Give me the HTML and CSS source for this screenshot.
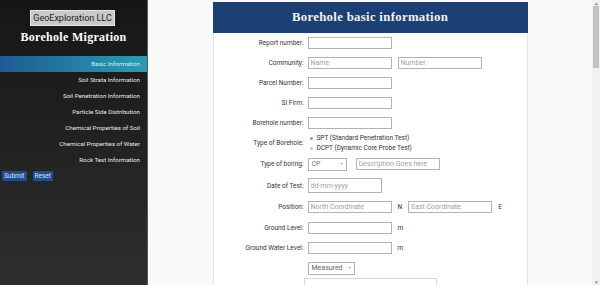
FILE: index.html
```html
<!DOCTYPE html>
<html>
<head>
<meta charset="utf-8">
<link rel="stylesheet" href="styles.css">
</head>
<body>
<div class="app">
  <aside class="sidebar">
    <div class="brand"><span class="company">GeoExploration LLC</span></div>
    <h1 class="app-title">Borehole Migration</h1>
    <nav class="nav">
      <a class="nav-item active">Basic Information</a>
      <a class="nav-item">Soil Strata Information</a>
      <a class="nav-item">Soil Penetration Information</a>
      <a class="nav-item">Particle Side Distribution</a>
      <a class="nav-item">Chemical Properties of Soil</a>
      <a class="nav-item">Chemical Properties of Water</a>
      <a class="nav-item">Rock Test Information</a>
    </nav>
    <div class="actions">
      <button class="btn">Submit</button>
      <button class="btn">Reset</button>
    </div>
  </aside>
  <main class="main">
    <section class="card">
      <header class="card-head"><h2>Borehole basic information</h2></header>
      <form class="card-body">
        <div class="row"><label class="lbl">Report number:</label><input class="inp"></div>
        <div class="row"><label class="lbl">Community:</label><input class="inp" placeholder="Name"><input class="inp second" placeholder="Number"></div>
        <div class="row"><label class="lbl">Parcel Number:</label><input class="inp"></div>
        <div class="row"><label class="lbl">SI Firm:</label><input class="inp"></div>
        <div class="row"><label class="lbl">Borehole number:</label><input class="inp"></div>
        <div class="row r-type"><label class="lbl">Type of Borehole:</label>
          <div class="radios">
            <div class="radio"><span class="dot on"></span>SPT (Standard Penetration Test)</div>
            <div class="radio"><span class="dot"></span>DCPT (Dynamic Core Probe Test)</div>
          </div>
        </div>
        <div class="row r-boring"><label class="lbl">Type of boring:</label><div class="sel sel-cp">CP<span class="caret">•</span></div><input class="inp desc" placeholder="Description Goes here"></div>
        <div class="row r-date"><label class="lbl">Date of Test:</label><input class="inp date" placeholder="dd-mm-yyyy"></div>
        <div class="row r-pos"><label class="lbl">Position:</label><input class="inp" placeholder="North Coordinate"><span class="unit">N</span><input class="inp east" placeholder="East Coordinate"><span class="unit">E</span></div>
        <div class="row"><label class="lbl">Ground Level:</label><input class="inp"><span class="unit">m</span></div>
        <div class="row"><label class="lbl">Ground Water Level:</label><input class="inp"><span class="unit">m</span></div>
        <div class="row"><span class="lbl"></span><div class="sel sel-meas">Measured<span class="caret">•</span></div></div>
        <div class="row r-box"><span class="lbl"></span><div class="box"></div></div>
      </form>
    </section>
  </main>
  <div class="scrollbar" aria-hidden="true">
    <span class="sb-arrow">▴</span>
    <span class="sb-thumb"></span>
    <span class="sb-fill"></span>
    <span class="sb-arrow">▾</span>
  </div>
</div>
</body>
</html>
```
FILE: styles.css
```css
* { box-sizing: border-box; }
html, body { margin: 0; padding: 0; }
body {
  font-family: Roboto, "Liberation Sans", sans-serif;
  background: #f9f9f9;
  color: #333;
  height: 100vh;
  overflow: hidden;
}
.app { display: flex; height: 100vh; }
.sidebar {
  width: 148px;
  flex: 0 0 148px;
  height: 100vh;
  background: linear-gradient(#161616, #2e2e2e);
  border-right: 1px solid #5a5a5a;
  padding-top: 10px;
}
.brand { display: flex; justify-content: center; }
.company {
  display: inline-block;
  background: #c9c9c9;
  border: 1px solid #e6e6e6;
  color: #222;
  font-size: 9px;
  line-height: 12px;
  padding: 1px 2px;
  margin-left: -2px;
}
.app-title {
  margin: 2px 0 0;
  text-align: center;
  color: #fff;
  font-family: "Liberation Serif", serif;
  font-weight: bold;
  font-size: 12px;
  line-height: 18px;
  letter-spacing: 0.3px;
}
.nav { margin-top: 10px; display: flex; flex-direction: column; }
.nav-item {
  display: block;
  height: 16px;
  line-height: 16px;
  text-align: right;
  padding-right: 7px;
  color: #e8e8e8;
  font-size: 6.2px;
}
.nav-item.active {
  background: linear-gradient(90deg, #1d5c93, #2a9db2);
  color: #dfeef5;
}
.actions { display: flex; gap: 6px; padding: 3px 0 0 2px; }
.btn {
  font-family: Roboto, "Liberation Sans", sans-serif;
  font-size: 6.5px;
  height: 10px;
  line-height: 10px;
  padding: 0 2px;
  border: 0;
  border-radius: 1px;
  background: #1f4d8e;
  color: #d9e4f2;
}
.main {
  flex: 1;
  height: 100vh;
  overflow: hidden;
  display: flex;
  justify-content: center;
  align-items: flex-start;
  padding: 2px 0 0;
}
.scrollbar {
  width: 8px;
  flex: 0 0 8px;
  height: 100vh;
  background: #f1f1f1;
  display: flex;
  flex-direction: column;
  align-items: center;
}
.sb-arrow { font-size: 5px; line-height: 6px; color: #777; }
.sb-thumb { width: 6px; height: 62px; background: #c1c1c1; }
.sb-fill { flex: 1; }
.card {
  width: 315px;
  background: #fff;
  border: 1px solid #e3e3e3;
  border-top: 0;
  margin-bottom: 20px;
}
.card-head {
  background: #1c3f74;
  height: 31px;
  margin: 0 -1px;
  display: flex;
  align-items: center;
  justify-content: center;
}
.card-head h2 {
  margin: 0;
  color: #f2f2f2;
  font-family: "Liberation Serif", serif;
  font-weight: bold;
  font-size: 12.8px;
  letter-spacing: 0.3px;
}
.card-body { padding: 0 0 300px; }
.row {
  display: flex;
  align-items: center;
  height: 20px;
}
.lbl {
  width: 90px;
  flex: 0 0 90px;
  text-align: right;
  font-size: 6.5px;
  color: #333;
  margin-right: 4px;
}
.inp {
  width: 84px;
  height: 12px;
  border: 1px solid #aeb4bd;
  border-radius: 0;
  padding: 0 2px;
  font-family: Roboto, "Liberation Sans", sans-serif;
  font-size: 7px;
  color: #333;
  outline: none;
  background: #fff;
}
.inp::placeholder { color: #a0a0a0; }
.inp.second { margin-left: 6px; }
.inp.desc { margin-left: 9px; }
.inp.date { width: 74px; height: 15px; }
.inp.east { margin-left: 6px; }
.unit { font-size: 6.5px; color: #333; margin-left: 6px; }
.radios { display: flex; flex-direction: column; margin-left: 2px; }
.radio {
  font-size: 6.5px;
  line-height: 10px;
  color: #333;
  display: flex;
  align-items: center;
}
.dot {
  width: 3px; height: 3px; border-radius: 50%;
  background: #999;
  margin-right: 4px;
}
.dot:not(.on) { background: #ccc; }
.r-boring { height: 22px; }
.r-date { height: 21px; }
.r-pos { height: 22px; }
.sel {
  height: 13px;
  border: 1px solid #aeb4bd;
  font-size: 7px;
  color: #777;
  display: flex;
  align-items: center;
  justify-content: space-between;
  padding: 0 3px;
}
.sel-cp { width: 39px; }
.sel-meas { width: 47px; color: #666; }
.caret { font-size: 5px; color: #444; }
.r-box { align-items: flex-start; height: 30px; }
.box {
  margin-left: -4px;
  width: 133px;
  height: 30px;
  border: 1px solid #d8d8d8;
}
```
